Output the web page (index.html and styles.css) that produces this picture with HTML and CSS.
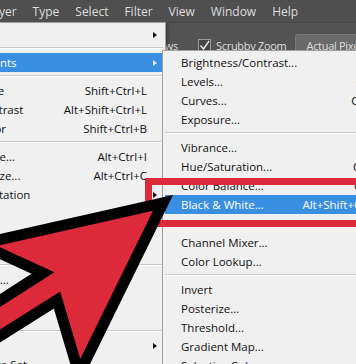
FILE: index.html
```html
<!DOCTYPE html>
<html lang="en">
<head>
  <meta charset="UTF-8">
  <title>Image &gt; Adjustments</title>
  <link rel="stylesheet" href="styles.css">
</head>
<body>
  <div class="menubar">
    <span class="menubar-item first">Layer</span>
    <span class="menubar-item">Type</span>
    <span class="menubar-item">Select</span>
    <span class="menubar-item">Filter</span>
    <span class="menubar-item">View</span>
    <span class="menubar-item">Window</span>
    <span class="menubar-item">Help</span>
  </div>

  <div class="options">
    <span class="opt-label opt-first">Zoom All Windows</span>
    <span class="checkbox"><svg width="11" height="11" viewBox="0 0 11 11"><path d="M1.5 5.5 L4.5 9 L10 1" fill="none" stroke="#e8e8e8" stroke-width="1.4"/></svg></span>
    <span class="opt-label">Scrubby Zoom</span>
    <span class="opt-button">Actual Pixels</span>
  </div>

  <div class="menu image-menu">
    <div class="item sub"><span class="name">Mode</span><span class="key"></span><span class="arrow"></span></div>
    <div class="sep"></div>
    <div class="item sub active"><span class="name">Adjustments</span><span class="key"></span><span class="arrow"></span></div>
    <div class="sep"></div>
    <div class="item"><span class="name">Auto Tone</span><span class="key">Shift+Ctrl+L</span></div>
    <div class="item"><span class="name">Auto Contrast</span><span class="key">Alt+Shift+Ctrl+L</span></div>
    <div class="item"><span class="name">Auto Color</span><span class="key">Shift+Ctrl+B</span></div>
    <div class="sep"></div>
    <div class="item"><span class="name">Image Size...</span><span class="key">Alt+Ctrl+I</span></div>
    <div class="item"><span class="name">Canvas Size...</span><span class="key">Alt+Ctrl+C</span></div>
    <div class="item sub"><span class="name">Image Rotation</span><span class="key"></span><span class="arrow"></span></div>
    <div class="item"><span class="name">Crop</span></div>
    <div class="item"><span class="name">Trim...</span></div>
    <div class="item"><span class="name">Reveal All</span></div>
    <div class="sep"></div>
    <div class="item"><span class="name">Duplicate...</span></div>
    <div class="item"><span class="name">Apply Image...</span></div>
    <div class="item"><span class="name">Calculations...</span></div>
    <div class="sep"></div>
    <div class="item sub"><span class="name">Variables</span><span class="key"></span><span class="arrow"></span></div>
    <div class="item"><span class="name">Apply Data Set...</span></div>
  </div>

  <div class="menu adjust-menu">
    <div class="item"><span class="name">Brightness/Contrast...</span><span class="key"></span></div>
    <div class="item"><span class="name">Levels...</span><span class="key">Ctrl+L</span></div>
    <div class="item"><span class="name">Curves...</span><span class="key">Ctrl+M</span></div>
    <div class="item"><span class="name">Exposure...</span><span class="key"></span></div>
    <div class="sep"></div>
    <div class="item"><span class="name">Vibrance...</span><span class="key"></span></div>
    <div class="item"><span class="name">Hue/Saturation...</span><span class="key">Ctrl+U</span></div>
    <div class="item"><span class="name">Color Balance...</span><span class="key">Ctrl+B</span></div>
    <div class="item active"><span class="name">Black &amp; White...</span><span class="key">Alt+Shift+Ctrl+B</span></div>
    <div class="item"></div>
    <div class="item"><span class="name">Channel Mixer...</span><span class="key"></span></div>
    <div class="item"><span class="name">Color Lookup...</span><span class="key"></span></div>
    <div class="sep"></div>
    <div class="item"><span class="name">Invert</span><span class="key">Ctrl+I</span></div>
    <div class="item"><span class="name">Posterize...</span><span class="key"></span></div>
    <div class="item"><span class="name">Threshold...</span><span class="key"></span></div>
    <div class="item"><span class="name">Gradient Map...</span><span class="key"></span></div>
    <div class="item"><span class="name">Selective Color...</span><span class="key"></span></div>
  </div>

  <div class="callout-box"></div>

  <svg class="pointer" width="356" height="364" viewBox="0 0 356 364">
    <polygon points="163,203 79,374 57,300 -60,374 -60,339 43,273 -20,244"
             fill="#dd2a3b" stroke="#000" stroke-width="11" stroke-linejoin="miter"/>
  </svg>
</body>
</html>
```

FILE: styles.css
```css
:root {
  --bar: #4f4f4f;
  --bar-text: #dedede;
  --menu-bg: #f0f0f0;
  --menu-border: #a0a0a0;
  --highlight: #3b8fe2;
  --callout: #dd2a3b;
}
html, body {
  margin: 0;
  width: 356px;
  height: 364px;
  overflow: hidden;
}
body {
  position: relative;
  background: #3a3a3a;
  font-family: 'Open Sans', 'Noto Sans', sans-serif;
  color: #111;
}
.menubar {
  height: 22px;
  background: var(--bar);
  display: flex;
  align-items: center;
  font-size: 12px;
  color: var(--bar-text);
  white-space: nowrap;
}
.menubar-item {
  margin-right: 16px;
}
.menubar-item.first {
  margin-left: -14px;
}
.options {
  height: 44px;
  background: #535353;
  border-top: 1px solid #474747;
  display: flex;
  align-items: center;
  font-size: 11px;
  letter-spacing: -0.3px;
  color: var(--bar-text);
  white-space: nowrap;
}
.opt-first {
  width: 178px;
  text-align: right;
  flex: none;
}
.checkbox {
  margin-left: 20px;
  width: 11px;
  height: 11px;
  border: 1px solid #9a9a9a;
  background: #454545;
  display: flex;
}
.checkbox + .opt-label {
  margin-left: 5px;
}
.opt-button {
  margin-left: 9px;
  padding: 3px 10px;
  background: #6a6a6a;
  border: 1px solid #7a7a7a;
  border-radius: 3px;
}
.menu {
  position: absolute;
  background: var(--menu-bg);
  border: 1px solid var(--menu-border);
  box-shadow: 2px 2px 3px rgba(0,0,0,0.25);
  padding: 2px 2px 0;
  font-size: 11.5px;
  white-space: nowrap;
}
.image-menu {
  left: -59px;
  top: 22px;
  width: 219px;
}
.adjust-menu {
  left: 162px;
  top: 50px;
  width: 230px;
}
.item {
  height: 19px;
  display: grid;
  align-items: center;
}
.image-menu .item {
  grid-template-columns: 1fr auto 16px;
  padding-left: 5px;
}
.adjust-menu .item {
  grid-template-columns: 1fr auto;
  padding: 0 8px 0 16px;
}
.item.active {
  background: var(--highlight);
  color: #fff;
}
.arrow {
  width: 0;
  height: 0;
  margin-left: 6px;
  border-left: 4px solid #111;
  border-top: 3.5px solid transparent;
  border-bottom: 3.5px solid transparent;
}
.item.active .arrow {
  border-left-color: #dfefff;
}
.sep {
  height: 1px;
  margin: 3px 0 4px;
  background: #c8c8c8;
  border-bottom: 1px solid #fff;
}
.callout-box {
  position: absolute;
  left: 145px;
  top: 178px;
  width: 230px;
  height: 35px;
  border: 7px solid var(--callout);
}
.pointer {
  position: absolute;
  left: 0;
  top: 0;
}
```
